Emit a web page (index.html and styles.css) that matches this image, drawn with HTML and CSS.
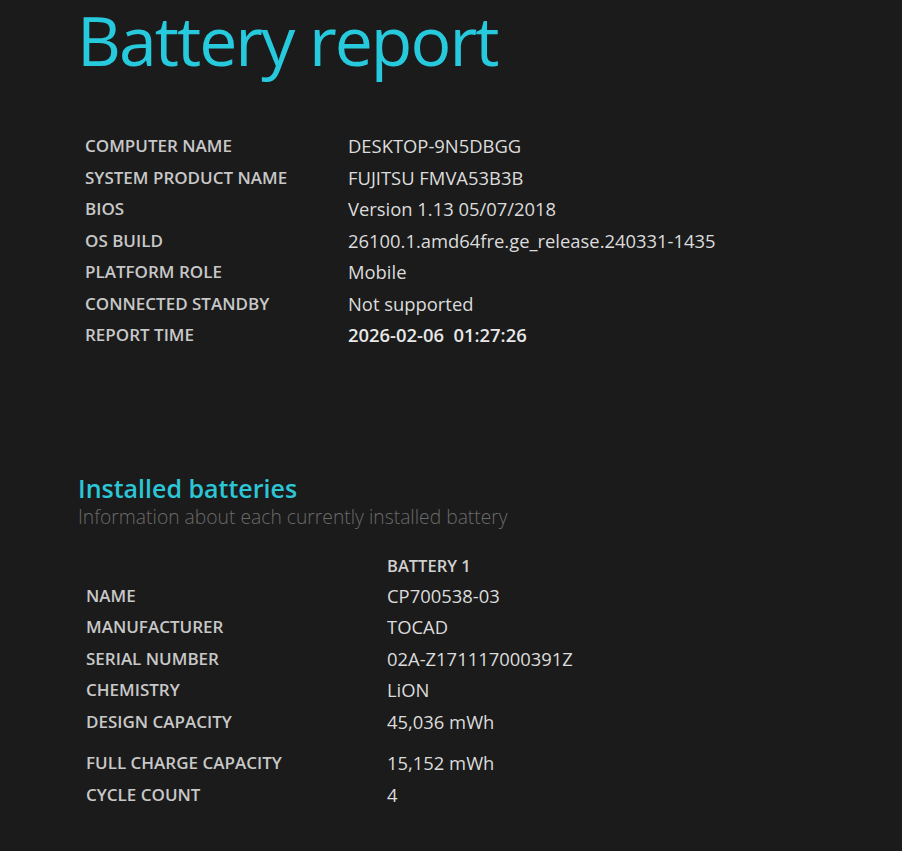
FILE: index.html
```html
<!DOCTYPE html>
<html>
<head>
<meta charset="utf-8">
<title>Battery report</title>
<link rel="stylesheet" href="styles.css">
</head>
<body>
<main class="page">
  <h1 class="title">Battery report</h1>
  <table class="info">
    <tr><td class="label">COMPUTER NAME</td><td class="value">DESKTOP-9N5DBGG</td></tr>
    <tr><td class="label">SYSTEM PRODUCT NAME</td><td class="value">FUJITSU FMVA53B3B</td></tr>
    <tr><td class="label">BIOS</td><td class="value">Version 1.13 05/07/2018</td></tr>
    <tr><td class="label">OS BUILD</td><td class="value">26100.1.amd64fre.ge_release.240331-1435</td></tr>
    <tr><td class="label">PLATFORM ROLE</td><td class="value">Mobile</td></tr>
    <tr><td class="label">CONNECTED STANDBY</td><td class="value">Not supported</td></tr>
    <tr><td class="label">REPORT TIME</td><td class="value strong">2026-02-06&nbsp;&nbsp;01:27:26</td></tr>
  </table>

  <h2 class="section">Installed batteries</h2>
  <p class="desc">Information about each currently installed battery</p>

  <table class="batteries">
    <tr class="head-row"><td class="label"></td><td class="colhead">BATTERY 1</td></tr>
    <tr><td class="label">NAME</td><td class="value">CP700538-03</td></tr>
    <tr><td class="label">MANUFACTURER</td><td class="value">TOCAD</td></tr>
    <tr><td class="label">SERIAL NUMBER</td><td class="value">02A-Z171117000391Z</td></tr>
    <tr><td class="label">CHEMISTRY</td><td class="value">LiON</td></tr>
    <tr class="gap-after"><td class="label">DESIGN CAPACITY</td><td class="value">45,036 mWh</td></tr>
    <tr><td class="label">FULL CHARGE CAPACITY</td><td class="value">15,152 mWh</td></tr>
    <tr><td class="label">CYCLE COUNT</td><td class="value">4</td></tr>
  </table>
</main>
</body>
</html>
```

FILE: styles.css
```css
html, body {
  margin: 0;
  padding: 0;
  background: #1b1b1b;
}
body {
  font-family: "Open Sans", "Noto Sans", sans-serif;
  color: #d6d6d6;
}
.page {
  padding: 0 0 0 78px;
}
.title {
  margin: -6px 0 0 -1px;
  font-family: "Open Sans", sans-serif;
  font-weight: 400;
  font-size: 68px;
  line-height: 92px;
  color: #27c9dc;
  letter-spacing: -2px;
}
.info {
  border-collapse: collapse;
  margin-top: 44px;
  margin-left: 3px;
}
.info td {
  padding: 0 4px;
  height: 31.5px;
  vertical-align: middle;
}
.label {
  font-weight: 600;
  font-size: 17px;
  color: #c8c8c8;
  width: 255px;
}
.value {
  font-size: 18.4px;
  color: #dcdcdc;
}
.value.strong {
  font-weight: 600;
  color: #e8e8e8;
}
.section {
  margin: 122px 0 0 0;
  font-weight: 600;
  font-size: 25px;
  line-height: 30px;
  color: #2cc6d6;
}
.desc {
  margin: 0;
  font-size: 19.3px;
  font-weight: 300;
  line-height: 28px;
  color: #6a6a6a;
}
.batteries {
  border-collapse: collapse;
  margin-top: 20px;
  margin-left: 4px;
}
.batteries td {
  padding: 0 4px;
  height: 31.5px;
  vertical-align: middle;
}
.batteries .head-row td {
  height: 29px;
}
.batteries .label {
  width: 293px;
}
.colhead {
  font-weight: 600;
  font-size: 16.5px;
  color: #d0d0d0;
}
.batteries .gap-after td {
  height: 31.5px;
  padding-bottom: 10px;
}
```
